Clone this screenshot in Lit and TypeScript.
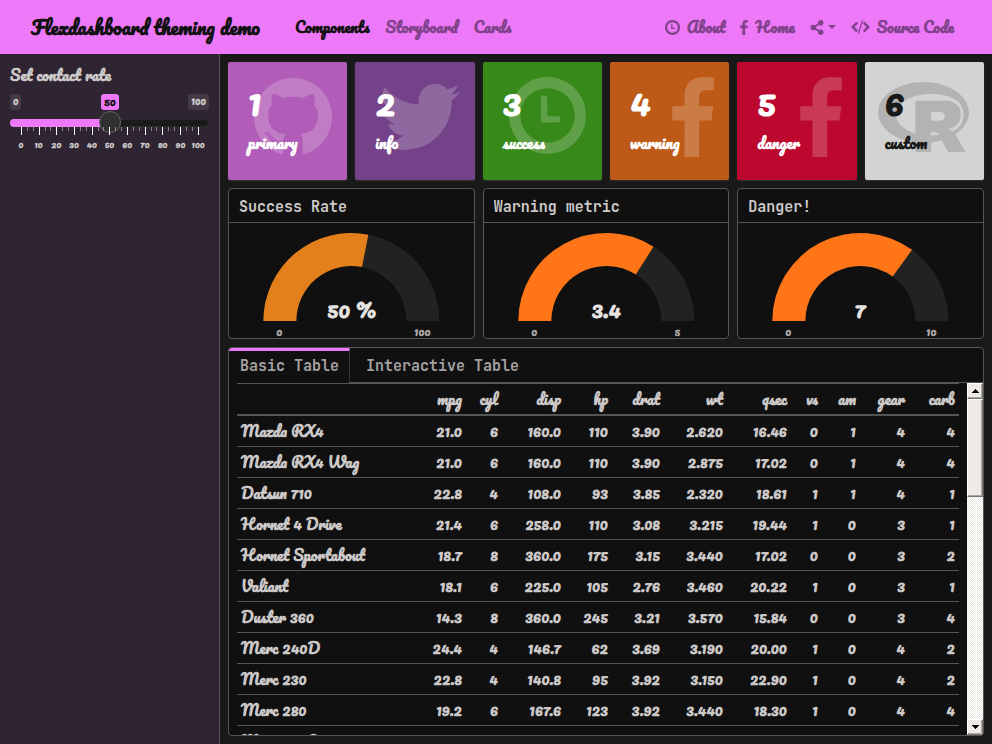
import { LitElement, html, svg, css } from "lit";
import { customElement, property, state, query } from "lit/decorators.js";
import { classMap } from "lit/directives/class-map.js";

interface Glyph { box: string; d: string; w: number; h: number; }

const CLOCK =
  "M796 504h64q32 0 32 32v376h224q32 0 32 32v64q0 32-32 32h-320q-32 0-32-32v-472q0-32 32-32zM1440 896q0-148-73-273t-198-198-273-73-273 73-198 198-73 273 73 273 198 198 273 73 273-73 198-198 73-273zm224 0q0 209-103 385.5t-279.5 279.5-385.5 103-385.5-103-279.5-279.5-103-385.5 103-385.5 279.5-279.5 385.5-103 385.5 103 279.5 279.5 103 385.5z";
const FACEBOOK =
  "M1343 12v264h-157q-86 0-116 36t-30 108v189h293l-39 296h-254v759h-306v-759h-255v-296h255v-218q0-186 104-288.5t277-102.5q147 0 228 12z";
const GITHUB =
  "M896 128q209 0 385.5 103t279.5 279.5 103 385.5q0 251-146.5 451.5t-378.5 277.5q-27 5-40-7t-13-30q0-3 .5-76.5t.5-134.5q0-97-52-142 57-6 102.5-18t94-39 81-66.5 53-105 20.5-150.5q0-119-79-206 37-91-8-204-28-9-81 11t-92 44l-38 24q-93-26-192-26t-192 26q-16-11-42.5-27t-83.5-38.5-85-13.5q-45 113-8 204-79 87-79 206 0 85 20.5 150t52.5 105 80.5 67 94 39 102.5 18q-39 36-49 103-21 10-45 15t-57 5-65.5-21.5-55.5-62.5q-19-32-48.5-52t-49.5-24l-20-3q-21 0-29 4.5t-5 11.5 9 14 13 12l7 5q22 10 43.5 38t31.5 51l10 23q13 38 44 61.5t67 30 69.5 7 55.5-3.5l23-4q0 38 .5 88.5t.5 54.5q0 18-13 30t-40 7q-232-77-378.5-277.5t-146.5-451.5q0-209 103-385.5t279.5-279.5 385.5-103zm-477 1103q3-7-7-12-10-3-13 2-3 7 7 12 9 6 13-2zm31 34q7-5-2-16-10-9-16-3-7 5 2 16 10 10 16 3zm30 45q9-7 0-19-8-13-17-6-9 5 0 18t17 7zm42 42q8-8-4-19-12-12-20-3-9 8 4 19 12 12 20 3zm57 25q3-11-13-16-15-4-19 7t13 15q15 6 19-6zm63 5q0-13-17-11-16 0-16 11 0 13 17 11 16 0 16-11zm58-10q-2-11-18-9-16 3-14 15t18 8 14-14z";
const TWITTER =
  "M1684 408q-67 98-162 167 1 14 1 42 0 130-38 259.5t-115.5 248.5-184.5 210.5-258 146-323 54.5q-271 0-496-145 35 4 78 4 225 0 401-138-105-2-188-64.5t-114-159.5q33 5 61 5 43 0 85-11-112-23-185.5-111.5t-73.5-205.5v-4q68 38 146 41-66-44-105-115t-39-154q0-88 44-163 121 149 294.5 238.5t371.5 99.5q-8-38-8-74 0-134 94.5-228.5t228.5-94.5q140 0 236 102 109-21 205-78-37 115-142 178 93-10 186-50z";
const R_LOGO =
  "M581 226.6C581 119.1 450.9 32 290.5 32S0 119.1 0 226.6C0 322.4 103.3 402 239.4 418.1V480h99.1v-61.5c24.3-2.7 47.6-7.4 69.4-13.9L448 480h112l-67.4-113.7c54.5-35.4 88.4-84.9 88.4-139.7zm-466.8 14.5c0-73.5 98.9-133 220.8-133s211.9 40.7 211.9 133c0 50.1-26.5 85-70.3 106.4-2.4-1.6-4.7-2.9-6.4-3.7-10.2-5.2-27.8-10.5-27.8-10.5s86.6-6.4 86.6-92.7-90.6-87.9-90.6-87.9h-199V361c-74.1-21.5-125.2-67.1-125.2-119.9zm225.1 38.3v-55.6c57.8 0 87.8-6.8 87.8 27.3 0 36.5-38.2 28.3-87.8 28.3zm-.9 72.5H365c10.8 0 18.9 11.7 24 19.2-16.1 1.9-33 2.8-50.6 2.9v-22.1z";
const SHARE =
  "M352 320c-22.608 0-43.387 7.819-59.79 20.895l-102.486-64.054a96.551 96.551 0 0 0 0-41.683l102.486-64.054C308.613 184.181 329.392 192 352 192c53.019 0 96-42.981 96-96S405.019 0 352 0s-96 42.981-96 96c0 7.158.79 14.13 2.276 20.841L155.79 180.895C139.387 167.819 118.608 160 96 160c-53.019 0-96 42.981-96 96s42.981 96 96 96c22.608 0 43.387-7.819 59.79-20.895l102.486 64.054A96.301 96.301 0 0 0 256 416c0 53.019 42.981 96 96 96s96-42.981 96-96-42.981-96-96-96z";
const CODE =
  "M6 2 7 3.500 3.500 7 7 10.500 6 12 5 12 0 7 5 2zM13 2 12 3.500 15.500 7 12 10.500 13 12 14 12 19 7 14 2zM11 0 12.200.400 8 14 6.800 13.600z";

const glyph = (g: Glyph) => html`<svg
  width=${g.w} height=${g.h} viewBox=${g.box} aria-hidden="true"
>${svg`<path fill="currentColor" d=${g.d}></path>`}</svg>`;

const clockBox = "128 128 1536 1536";
const fbBox = "479 0 864 1664";

const BOXES: { value: string; label: string; icon: Glyph }[] = [
  { value: "1", label: "primary", icon: { box: "128 128 1536 1536", d: GITHUB, w: 78, h: 78 } },
  { value: "2", label: "info", icon: { box: "108 256 1576 1280", d: TWITTER, w: 81, h: 66 } },
  { value: "3", label: "success", icon: { box: "128 128 1556 1600", d: CLOCK, w: 78, h: 80 } },
  { value: "4", label: "warning", icon: { box: fbBox, d: FACEBOOK, w: 42, h: 80 } },
  { value: "5", label: "danger", icon: { box: fbBox, d: FACEBOOK, w: 42, h: 80 } },
  { value: "6", label: "custom", icon: { box: "0 32 581 448", d: R_LOGO, w: 91, h: 70 } },
];

const COLUMNS: [string, number][] = [
  ["", 175], ["mpg", 54], ["cyl", 36], ["disp", 63], ["hp", 47], ["drat", 52],
  ["wt", 63], ["qsec", 64], ["vs", 31], ["am", 38], ["gear", 49], ["carb", 50],
];

const ROWS = [
  "Mazda RX4|21.0|6|160.0|110|3.90|2.620|16.46|0|1|4|4",
  "Mazda RX4 Wag|21.0|6|160.0|110|3.90|2.875|17.02|0|1|4|4",
  "Datsun 710|22.8|4|108.0|93|3.85|2.320|18.61|1|1|4|1",
  "Hornet 4 Drive|21.4|6|258.0|110|3.08|3.215|19.44|1|0|3|1",
  "Hornet Sportabout|18.7|8|360.0|175|3.15|3.440|17.02|0|0|3|2",
  "Valiant|18.1|6|225.0|105|2.76|3.460|20.22|1|0|3|1",
  "Duster 360|14.3|8|360.0|245|3.21|3.570|15.84|0|0|3|4",
  "Merc 240D|24.4|4|146.7|62|3.69|3.190|20.00|1|0|4|2",
  "Merc 230|22.8|4|140.8|95|3.92|3.150|22.90|1|0|4|2",
  "Merc 280|19.2|6|167.6|123|3.92|3.440|18.30|1|0|4|4",
  "Merc 280C|17.8|6|167.6|123|3.92|3.440|18.90|1|0|4|4",
].map((r) => r.split("|"));

@customElement("gauge-card")
export class GaugeCard extends LitElement {
  @property() heading = "";
  @property() value = "";
  @property() unit = "";
  @property() max = "";
  @property() color = "#ff7518";
  @property({ type: Number }) fraction = 0;

  static styles = css`
    :host {
      display: flex; flex-direction: column; flex: 1 1 0; min-width: 0;
      background: #101010; border: 1px solid #555; border-radius: 4px;
    }
    .title {
      margin: 0; padding: 4px 10px 0; border-bottom: 1px solid #555;
      font: 600 15px/29px "JetBrains Mono", "Liberation Mono", monospace; color: #ccc8c8;
    }
    .dial { display: block; width: 100%; height: 115px; }
    .value { font: bold 22px Pacifico, Lato, sans-serif; fill: #e6e2e2; }
    .limit { font: bold 11px Pacifico, Lato, sans-serif; fill: #aaa6a6; }
  `;

  private ring(to: number) {
    const a = Math.PI * (1 - to);
    const at = (r: number) => `${(88 + r * Math.cos(a)).toFixed(2)} ${(98 - r * Math.sin(a)).toFixed(2)}`;
    return `M0 98A88 88 0 0 1 ${at(88)}L${at(55)}A55 55 0 0 0 33 98Z`;
  }

  render() {
    return html`
      <h2 class="title">${this.heading}</h2>
      <svg class="dial" viewBox="0 0 176 115" role="img" aria-label=${this.heading}>
        <path d=${this.ring(1)} fill="#222"></path>
        <path d=${this.ring(this.fraction)} fill=${this.color}></path>
        <text class="value" x="88" y="95" text-anchor="middle">${this.value}${this.unit ? ` ${this.unit}` : ""}</text>
        <text class="limit" x="16" y="113" text-anchor="middle">0</text>
        <text class="limit" x="159" y="113" text-anchor="middle">${this.max}</text>
      </svg>
    `;
  }
}

@customElement("app-root")
export class AppRoot extends LitElement {
  @state() private rate = 50;
  @query(".rows") private rows!: HTMLElement;

  static styles = css`
    * { box-sizing: border-box; }
    :host {
      display: flex; flex-direction: column; height: 100vh; overflow: hidden;
      background: #191919; color: #ccc8c8;
      font: bold 15px/20px Pacifico, Lato, sans-serif;
    }
    svg { display: block; flex: none; }
    a { color: inherit; text-decoration: none; }

    .navbar {
      display: flex; align-items: center; flex: none; height: 54px;
      padding: 0 38px 0 31px; background: #ed78f8; color: #80428a;
    }
    .brand { font-size: 19px; color: #111; margin-right: 35px; }
    .links { display: flex; gap: 16px; }
    .tools { display: flex; gap: 15px; margin-left: auto; }
    .link { display: flex; align-items: center; gap: 7px; }
    .link.active { color: #111; }
    .share { gap: 4px; }
    .caret { border: 4px solid transparent; border-top-color: currentColor; border-bottom: 0; }

    .body { display: flex; flex: 1; min-height: 0; }
    .sidebar { flex: none; width: 220px; padding: 11px 10px; background: #2f2431; border-right: 1px solid #555; }
    .caption { display: block; }
    .bubbles { display: flex; justify-content: space-between; margin-top: 9px; font-size: 10px; line-height: 15px; }
    .bubble { padding: 0 3px; border-radius: 3px; background: #443a46; }
    .bubble.now { margin-left: 10px; background: #ed78f8; color: #111; font-size: 11px; line-height: 16px; }
    .range {
      appearance: none; display: block; width: 100%; height: 22px; margin: 2px 0 0; background: none;
    }
    .range::-webkit-slider-runnable-track {
      height: 8px; border-radius: 4px;
      background: linear-gradient(90deg, #ed78f8 var(--fill), #1b1b1b var(--fill));
      box-shadow: inset 0 0 0 1px rgb(255 255 255 / 8%);
    }
    .range::-webkit-slider-thumb {
      appearance: none; width: 22px; height: 22px; margin-top: -8px;
      border: 1px solid #666; border-radius: 50%; background: #303030;
    }
    .ticks { display: flex; justify-content: space-between; height: 8px; margin-top: -7px; padding: 0 10px 0 11px; }
    .tick { width: 1px; height: 4px; background: #8c848d; }
    .tick.major { height: 8px; background: #fff; }
    .scale { display: grid; grid-template-columns: repeat(11, 1fr); padding: 0 2px; font-size: 9px; line-height: 19px; text-align: center; }

    .main { display: flex; flex-direction: column; gap: 8px; flex: 1; min-width: 0; padding: 8px; }
    .row { display: flex; flex: none; gap: 8px; }
    .box {
      position: relative; flex: 1 1 0; min-width: 0; height: 118px; padding: 23px 20px;
      border-radius: 2px; background: var(--bg); color: #fff; box-shadow: 0 1px 2px #333;
    }
    .primary { --bg: #b05cb8; }
    .info { --bg: #744289; }
    .success { --bg: #37891a; }
    .warning { --bg: #bd5a17; }
    .danger { --bg: #bc082f; }
    .custom { --bg: #d3d3d3; color: #191919; }
    .art { position: absolute; top: 15px; right: 15px; height: 80px; display: flex; align-items: center; opacity: .2; }
    .custom .art { opacity: .17; }
    .number { position: relative; margin: 0; font-size: 36px; line-height: 32px; }
    .label { position: relative; margin: 16px 0 0; }

    .panel {
      display: flex; flex-direction: column; flex: 1; min-height: 0;
      background: #101010; border: 1px solid #555; border-radius: 4px; overflow: hidden;
    }
    .tabs { display: flex; flex: none; height: 35px; }
    .tab {
      appearance: none; margin: 0; padding: 2px 16px 0; background: none; cursor: pointer;
      border: 0; border-bottom: 1px solid #555;
      font: 600 15px/20px "JetBrains Mono", "Liberation Mono", monospace; color: #a5a1a1;
    }
    .tab.on { padding: 0 10px 3px 11px; border-top: 3px solid #ed78f8; border-right: 1px solid #333; border-bottom: 0; }
    .rest { flex: 1; border-bottom: 1px solid #555; }
    .pane { display: flex; flex: 1; min-height: 0; }
    .rows { flex: 1; min-width: 0; padding: 0 8px; overflow-y: scroll; scrollbar-width: none; }
    .data { width: 100%; table-layout: fixed; border-collapse: separate; border-spacing: 0; }
    .data th, .data td { height: 31px; padding: 0 4px; border-bottom: 1px solid #555; white-space: nowrap; text-align: right; }
    .data thead th { height: 33px; border-top: 1px solid #555; border-bottom-width: 2px; }
    .data .name { text-align: left; }

    .bar {
      display: flex; flex-direction: column; flex: none; width: 16px;
      background: repeating-conic-gradient(#ece9e4 0 25%, #fff 0 50%) 0 0 / 2px 2px;
    }
    .step, .grip {
      background: #eeebe7; border: 1px solid; border-color: #fff #777 #777 #fff; box-shadow: inset -1px -1px #aaa69f;
    }
    .step { display: flex; align-items: center; justify-content: center; height: 16px; padding: 0; flex: none; border-radius: 0; }
    .grip { height: 98px; }
    .down { margin-top: auto; }
  `;

  private slide(e: Event) {
    this.rate = Number((e.target as HTMLInputElement).value);
  }

  render() {
    return html`
      <nav class="navbar">
        <a class="brand" href="#">Flexdashboard theming demo</a>
        <div class="links">
          <a class="link active" href="#components">Components</a>
          <a class="link" href="#storyboard">Storyboard</a>
          <a class="link" href="#cards">Cards</a>
        </div>
        <div class="tools">
          <a class="link" href="#about">${glyph({ box: clockBox, d: CLOCK, w: 15, h: 15 })}About</a>
          <a class="link" href="#home">${glyph({ box: fbBox, d: FACEBOOK, w: 8, h: 15 })}Home</a>
          <a class="link share" href="#share" aria-label="Share">
            ${glyph({ box: "0 0 448 512", d: SHARE, w: 14, h: 15 })}<span class="caret"></span>
          </a>
          <a class="link" href="#source">${glyph({ box: "0 0 19 14", d: CODE, w: 19, h: 14 })}Source Code</a>
        </div>
      </nav>
      <div class="body">
        <aside class="sidebar">
          <label class="caption" for="rate">Set contact rate</label>
          <div class="bubbles">
            <span class="bubble">0</span><span class="bubble now">${this.rate}</span><span class="bubble">100</span>
          </div>
          <input class="range" id="rate" type="range" min="0" max="100" .value=${String(this.rate)}
            style="--fill: ${this.rate}%" @input=${this.slide} />
          <div class="ticks">
            ${Array.from({ length: 31 }, (_, i) => html`<span class=${classMap({ tick: true, major: i % 3 === 0 })}></span>`)}
          </div>
          <div class="scale">${Array.from({ length: 11 }, (_, i) => html`<span>${i * 10}</span>`)}</div>
        </aside>
        <main class="main">
          <section class="row">
            ${BOXES.map((b) => html`
              <div class="box ${b.label}">
                <div class="art">${glyph(b.icon)}</div>
                <p class="number">${b.value}</p>
                <p class="label">${b.label}</p>
              </div>`)}
          </section>
          <section class="row">
            <gauge-card heading="Success Rate" value="50" unit="%" max="100" color="#e3801b" fraction="0.562"></gauge-card>
            <gauge-card heading="Warning metric" value="3.4" max="5" fraction="0.68"></gauge-card>
            <gauge-card heading="Danger!" value="7" max="10" fraction="0.7"></gauge-card>
          </section>
          <section class="panel">
            <div class="tabs" role="tablist">
              <button class="tab on" role="tab" aria-selected="true">Basic Table</button>
              <button class="tab" role="tab" aria-selected="false">Interactive Table</button>
              <span class="rest"></span>
            </div>
            <div class="pane">
              <div class="rows">
                <table class="data">
                  <colgroup>${COLUMNS.map(([, w]) => html`<col width=${w} />`)}</colgroup>
                  <thead><tr>${COLUMNS.map(([c]) => html`<th>${c}</th>`)}</tr></thead>
                  <tbody>
                    ${ROWS.map((r) => html`<tr>
                      <th class="name">${r[0]}</th>${r.slice(1).map((c) => html`<td>${c}</td>`)}
                    </tr>`)}
                  </tbody>
                </table>
              </div>
              <div class="bar">
                <button class="step" aria-label="Scroll up" @click=${() => this.rows.scrollBy(0, -31)}>
                  <svg width="7" height="4" viewBox="0 0 7 4"><path d="M3 0h1v1h1v1h1v1h1v1H0V3h1V2h1V1h1z"></path></svg>
                </button>
                <div class="grip"></div>
                <button class="step down" aria-label="Scroll down" @click=${() => this.rows.scrollBy(0, 31)}>
                  <svg width="7" height="4" viewBox="0 0 7 4"><path d="M0 0h7v1H6v1H5v1H4v1H3V3H2V2H1V1H0z"></path></svg>
                </button>
              </div>
            </div>
          </section>
        </main>
      </div>
    `;
  }
}
